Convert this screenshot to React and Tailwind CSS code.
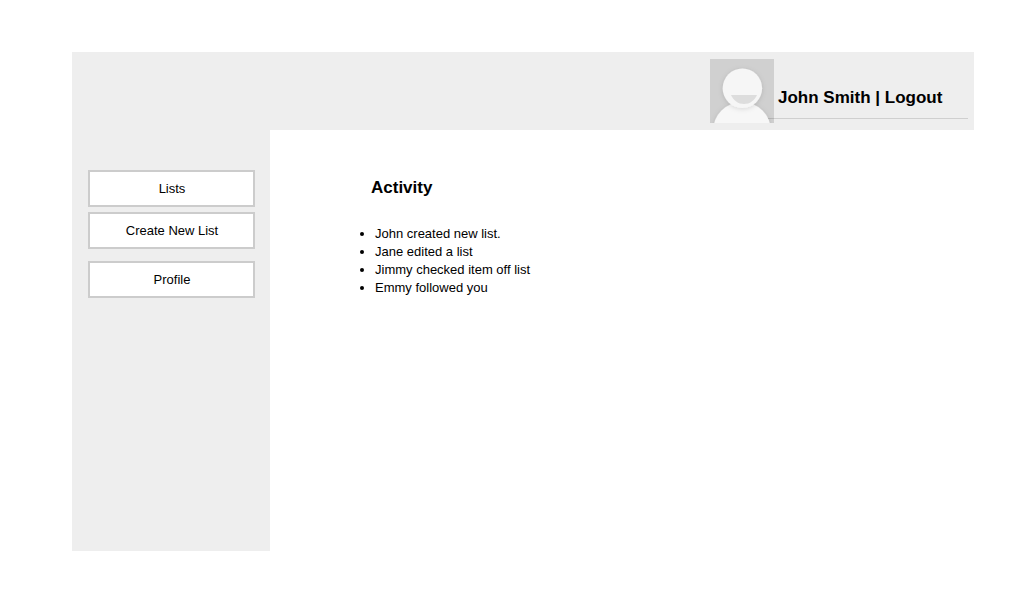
const activity = [
  'John created new list.',
  'Jane edited a list',
  'Jimmy checked item off list',
  'Emmy followed you',
];

function Avatar() {
  return (
    <svg className="h-16 w-16 shrink-0" viewBox="0 0 64 64" role="img" aria-label="Avatar">
      <defs>
        <filter id="soft" x="-30%" y="-30%" width="160%" height="160%">
          <feDropShadow dx="0" dy="1" stdDeviation="2.4" floodColor="#000" floodOpacity="0.13" />
        </filter>
      </defs>
      <rect width="64" height="64" fill="#d0d0d0" />
      <circle cx="32" cy="72" r="29" fill="#f7f7f7" filter="url(#soft)" />
      <circle cx="32.4" cy="29.3" r="19.7" fill="#f6f6f6" filter="url(#soft)" />
      <path d="M21 36H47C44.5 41.6 39.8 45 34 45S23.500 41.600 21 36Z" fill="#dddddd" />
    </svg>
  );
}

function NavButton({ children, className = '' }) {
  return (
    <button
      className={`block h-[37px] w-[167px] border-2 border-[#cccccc] bg-white pl-px text-center text-[13px] leading-[33px] ${className}`}
    >
      {children}
    </button>
  );
}

export default function App() {
  return (
    <div className="min-h-screen bg-white pt-[52px] pl-[72px] font-['Liberation_Sans',Arial,sans-serif] text-black">
      <div className="w-[902px]">
        <header className="flex h-[78px] items-start bg-[#eeeeee] pt-[7px] pl-[638px]">
          <Avatar />
          <div className="relative -ml-1.5 h-[60px] w-[200px] border-b border-black/13 pt-[29px] pl-2.5">
            <p className="text-[17px] leading-5 font-bold whitespace-nowrap">John Smith | Logout</p>
          </div>
        </header>
        <div className="flex">
          <nav className="h-[421px] w-[198px] bg-[#eeeeee] pt-10 pl-4">
            <NavButton>Lists</NavButton>
            <NavButton className="mt-[5px]">Create New List</NavButton>
            <NavButton className="mt-3">Profile</NavButton>
          </nav>
          <main className="pt-12 pl-[101px]">
            <h2 className="text-[17px] leading-5 font-bold">Activity</h2>
            <ul className="mt-[27px] ml-1 list-disc text-[13px] leading-[18px]">
              {activity.map((entry) => (
                <li key={entry}>{entry}</li>
              ))}
            </ul>
          </main>
        </div>
      </div>
    </div>
  );
}
